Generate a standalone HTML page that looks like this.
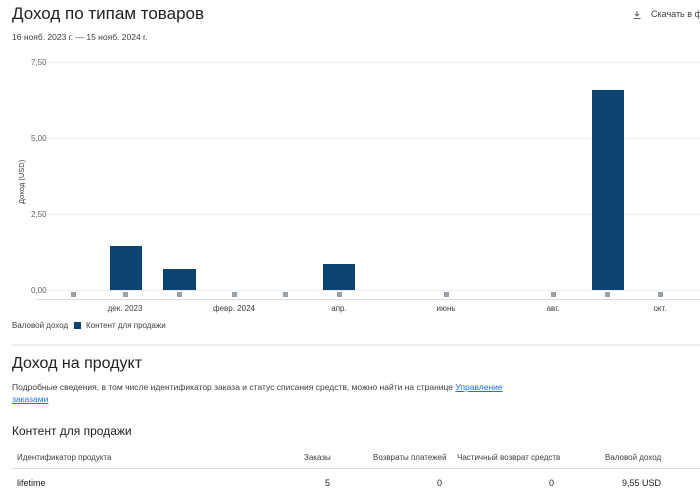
<!DOCTYPE html>
<html><head><meta charset="utf-8"><style>
body{margin:0;width:700px;height:493px;overflow:hidden;background:#fff;font-family:"Liberation Sans",sans-serif;color:#202124;position:relative}
.a{position:absolute;white-space:nowrap}
.s{font-size:8px;color:#5f6368}
.bar{position:absolute;background:#0b4470}
.sq{position:absolute;width:5px;height:5px;background:#9aa0a6;top:292px}
.g{position:absolute;left:48px;right:0;height:1px;background:#eceff1}
.xl{position:absolute;top:304px;font-size:8px;color:#3c4043;transform:translateX(-50%)}
</style></head><body>
<div class="a" style="left:12px;top:4px;font-size:17px">Доход по типам товаров</div>
<div class="a" style="left:12px;top:32px;font-size:8.5px;color:#3c4043">16 нояб. 2023 г. — 15 нояб. 2024 г.</div>
<svg class="a" style="left:632px;top:10px" width="10" height="10" viewBox="0 0 10 10"><path d="M5 1v5M3 4l2 2 2-2M1.5 8.5h7" stroke="#5f6368" stroke-width="1" fill="none"/></svg>
<div class="a" style="left:651px;top:9px;font-size:9px;color:#3c4043">Скачать в фо</div>

<div class="a s" style="left:31px;top:58px">7,50</div>
<div class="a s" style="left:31px;top:134px">5,00</div>
<div class="a s" style="left:31px;top:210px">2,50</div>
<div class="a s" style="left:31px;top:286px">0,00</div>
<div class="g" style="top:62px"></div>
<div class="g" style="top:138px"></div>
<div class="g" style="top:214px"></div>
<div class="g" style="top:290px"></div>
<div class="a" style="left:36px;top:299px;right:0;height:1px;background:#dadce0"></div>
<div class="a" style="left:17px;font-size:7.5px;color:#3c4043;transform:rotate(-90deg);transform-origin:left top;top:204px">Доход (USD)</div>

<div class="bar" style="left:110px;width:32px;top:246px;height:44px"></div>
<div class="bar" style="left:163px;width:33px;top:269px;height:21px"></div>
<div class="bar" style="left:323px;width:32px;top:264px;height:26px"></div>
<div class="bar" style="left:592px;width:32px;top:90px;height:200px"></div>

<div class="sq" style="left:71px"></div><div class="sq" style="left:123px"></div><div class="sq" style="left:177px"></div><div class="sq" style="left:232px"></div><div class="sq" style="left:283px"></div><div class="sq" style="left:337px"></div><div class="sq" style="left:444px"></div><div class="sq" style="left:551px"></div><div class="sq" style="left:605px"></div><div class="sq" style="left:658px"></div>

<div class="xl" style="left:125px">дек. 2023</div>
<div class="xl" style="left:234px">февр. 2024</div>
<div class="xl" style="left:339px">апр.</div>
<div class="xl" style="left:446px">июнь</div>
<div class="xl" style="left:553px">авг.</div>
<div class="xl" style="left:660px">окт.</div>

<div class="a" style="left:12px;top:321px;font-size:8px;color:#3c4043">Валовой доход</div>
<div class="a" style="left:74px;top:322px;width:7px;height:7px;background:#0b4470"></div>
<div class="a" style="left:86px;top:321px;font-size:8px;color:#3c4043">Контент для продажи</div>

<div class="a" style="left:12px;top:344px;right:0;height:2px;background:#eceff1"></div>
<div class="a" style="left:12px;top:355px;font-size:16px">Доход на продукт</div>
<div class="a" style="left:12px;top:381px;font-size:8.5px;color:#3c4043;line-height:12px">Подробные сведения, в том числе идентификатор заказа и статус списания средств, можно найти на странице <span style="color:#1a73e8;text-decoration:underline">Управление</span><br><span style="color:#1a73e8;text-decoration:underline">заказами</span></div>
<div class="a" style="left:12px;top:424px;font-size:12px">Контент для продажи</div>

<div class="a s" style="left:17px;top:453px;color:#3c4043">Идентификатор продукта</div>
<div class="a s" style="left:304px;top:453px;color:#3c4043">Заказы</div>
<div class="a s" style="left:373px;top:453px;color:#3c4043">Возвраты платежей</div>
<div class="a s" style="left:457px;top:453px;color:#3c4043">Частичный возврат средств</div>
<div class="a s" style="left:605px;top:453px;color:#3c4043">Валовой доход</div>
<div class="a" style="left:12px;top:468px;right:0;height:1px;background:#dadce0"></div>
<div class="a" style="left:17px;top:478px;font-size:9px">lifetime</div>
<div class="a" style="left:325px;top:478px;font-size:9px">5</div>
<div class="a" style="left:437px;top:478px;font-size:9px">0</div>
<div class="a" style="left:549px;top:478px;font-size:9px">0</div>
<div class="a" style="left:622px;top:478px;font-size:9px">9,55 USD</div>
</body></html>
